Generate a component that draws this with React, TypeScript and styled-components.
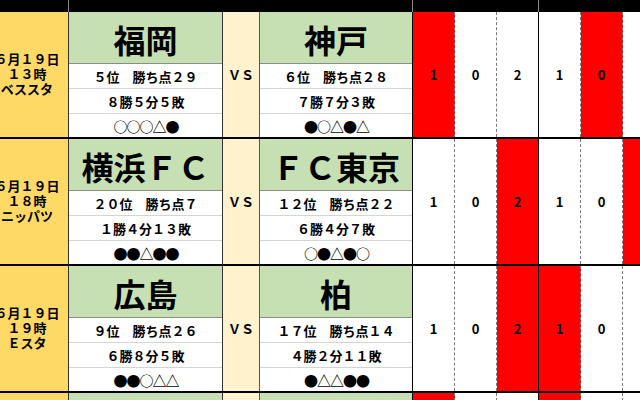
import React from "react";
import styled, { createGlobalStyle } from "styled-components";

const Global = createGlobalStyle`
  html, body { margin: 0; padding: 0; overflow: hidden; background: #fff; }
  * { box-sizing: border-box; }
`;

const Sheet = styled.div`
  width: 640px;
  height: 400px;
  overflow: hidden;
  background: #fff;
  font-family: "Noto Sans CJK JP", "Noto Sans", sans-serif;
  color: #000;
`;

const HeaderBar = styled.div`
  display: flex;
  height: 12px;
  background: #000;
`;

const HeaderCell = styled.div<{ $w: number }>`
  flex: 0 0 ${(p) => p.$w}px;
  border-right: 1px solid #8a8a8a;
`;

const Block = styled.div`
  display: flex;
  height: 127px;
  border-bottom: 2px solid #000;
  white-space: nowrap;
`;

const DateCol = styled.div`
  flex: 0 0 69px;
  background: #ffd966;
  border-right: 1px solid #333;
  display: flex;
  flex-direction: column;
  align-items: center;
  justify-content: center;
  padding: 0 14px 2px 0;
  overflow: hidden;
  font-size: 13px;
  font-weight: 700;
`;

const DateLine = styled.div`
  height: 15px;
  line-height: 15px;
  white-space: nowrap;
`;

const TeamCol = styled.div<{ $w: number; $edge: string }>`
  flex: 0 0 ${(p) => p.$w}px;
  border-right: 1px solid ${(p) => p.$edge};
  display: flex;
  flex-direction: column;
  overflow: hidden;
`;

const TeamName = styled.div`
  height: 52px;
  flex: 0 0 52px;
  background: #c6e0b4;
  border-bottom: 1px solid #8c8c8c;
  display: flex;
  align-items: center;
  justify-content: center;
  padding-top: 3px;
  font-size: 32px;
  font-weight: 700;
  line-height: 1;
`;

const InfoRow = styled.div<{ $last?: boolean }>`
  flex: ${(p) => (p.$last ? "1 1 auto" : "0 0 25px")};
  border-bottom: ${(p) => (p.$last ? "none" : "1px solid #d4d4d4")};
  display: flex;
  align-items: center;
  justify-content: center;
  font-size: 13px;
  font-weight: 700;
  line-height: 1;
`;

const FormRow = styled(InfoRow)`
  font-size: 14px;
  letter-spacing: -1px;
  padding-left: 1px;
`;

const VsCol = styled.div`
  flex: 0 0 37px;
  background: #fff2cc;
  border-right: 1px solid #555;
  display: flex;
  align-items: center;
  justify-content: center;
  padding-bottom: 1px;
  font-size: 13px;
  font-weight: 700;
`;

const ScoreCell = styled.div<{ $red: boolean; $solid: boolean }>`
  flex: 0 0 42px;
  background: ${(p) => (p.$red ? "#ff0000" : "#fff")};
  border-right: 1px ${(p) => (p.$solid ? "solid #000" : "dashed #7a7a7a")};
  display: flex;
  align-items: center;
  justify-content: center;
  padding-bottom: 1px;
  font-size: 13px;
  font-weight: 700;
`;

type Team = { name: string; rank: string; record: string; form: string };
type Match = {
  date: string;
  time: string;
  venue: string;
  home: Team;
  away: Team;
  reds: number[];
};

const scores = ["1", "0", "2", "1", "0", ""];

const matches: Match[] = [
  {
    date: "６月１９日",
    time: "１３時",
    venue: "ベススタ",
    home: { name: "福岡", rank: "５位　勝ち点２９", record: "８勝５分５敗", form: "○○○△●" },
    away: { name: "神戸", rank: "６位　勝ち点２８", record: "７勝７分３敗", form: "●○△●△" },
    reds: [0, 4],
  },
  {
    date: "６月１９日",
    time: "１８時",
    venue: "ニッパツ",
    home: { name: "横浜ＦＣ", rank: "２０位　勝ち点７", record: "１勝４分１３敗", form: "●●△●●" },
    away: { name: "ＦＣ東京", rank: "１２位　勝ち点２２", record: "６勝４分７敗", form: "○●△●○" },
    reds: [2, 5],
  },
  {
    date: "６月１９日",
    time: "１９時",
    venue: "Ｅスタ",
    home: { name: "広島", rank: "９位　勝ち点２６", record: "６勝８分５敗", form: "●●○△△" },
    away: { name: "柏", rank: "１７位　勝ち点１４", record: "４勝２分１１敗", form: "●△△●●" },
    reds: [2, 3],
  },
  {
    date: "６月１９日",
    time: "１９時",
    venue: "サンガＳ",
    home: { name: "京都", rank: "１０位　勝ち点２４", record: "６勝６分６敗", form: "△●○△●" },
    away: { name: "清水", rank: "１４位　勝ち点１９", record: "４勝７分７敗", form: "●△○●△" },
    reds: [0, 3],
  },
];

const TeamBlock: React.FC<{ team: Team; w: number; edge: string }> = ({ team, w, edge }) => (
  <TeamCol $w={w} $edge={edge}>
    <TeamName>{team.name}</TeamName>
    <InfoRow>{team.rank}</InfoRow>
    <InfoRow>{team.record}</InfoRow>
    <FormRow $last>{team.form}</FormRow>
  </TeamCol>
);

export default function App() {
  return (
    <>
      <Global />
      <Sheet>
        <HeaderBar>
          <HeaderCell $w={69} />
          <HeaderCell $w={344} />
          <HeaderCell $w={126} />
          <HeaderCell $w={200} />
        </HeaderBar>
        {matches.map((m, i) => (
          <Block key={i}>
            <DateCol>
              <DateLine>{m.date}</DateLine>
              <DateLine>{m.time}</DateLine>
              <DateLine>{m.venue}</DateLine>
            </DateCol>
            <TeamBlock team={m.home} w={154} edge="#333" />
            <VsCol>ＶＳ</VsCol>
            <TeamBlock team={m.away} w={153} edge="#000" />
            {scores.map((s, j) => (
              <ScoreCell key={j} $red={m.reds.includes(j)} $solid={j === 2}>
                {s}
              </ScoreCell>
            ))}
          </Block>
        ))}
      </Sheet>
    </>
  );
}
